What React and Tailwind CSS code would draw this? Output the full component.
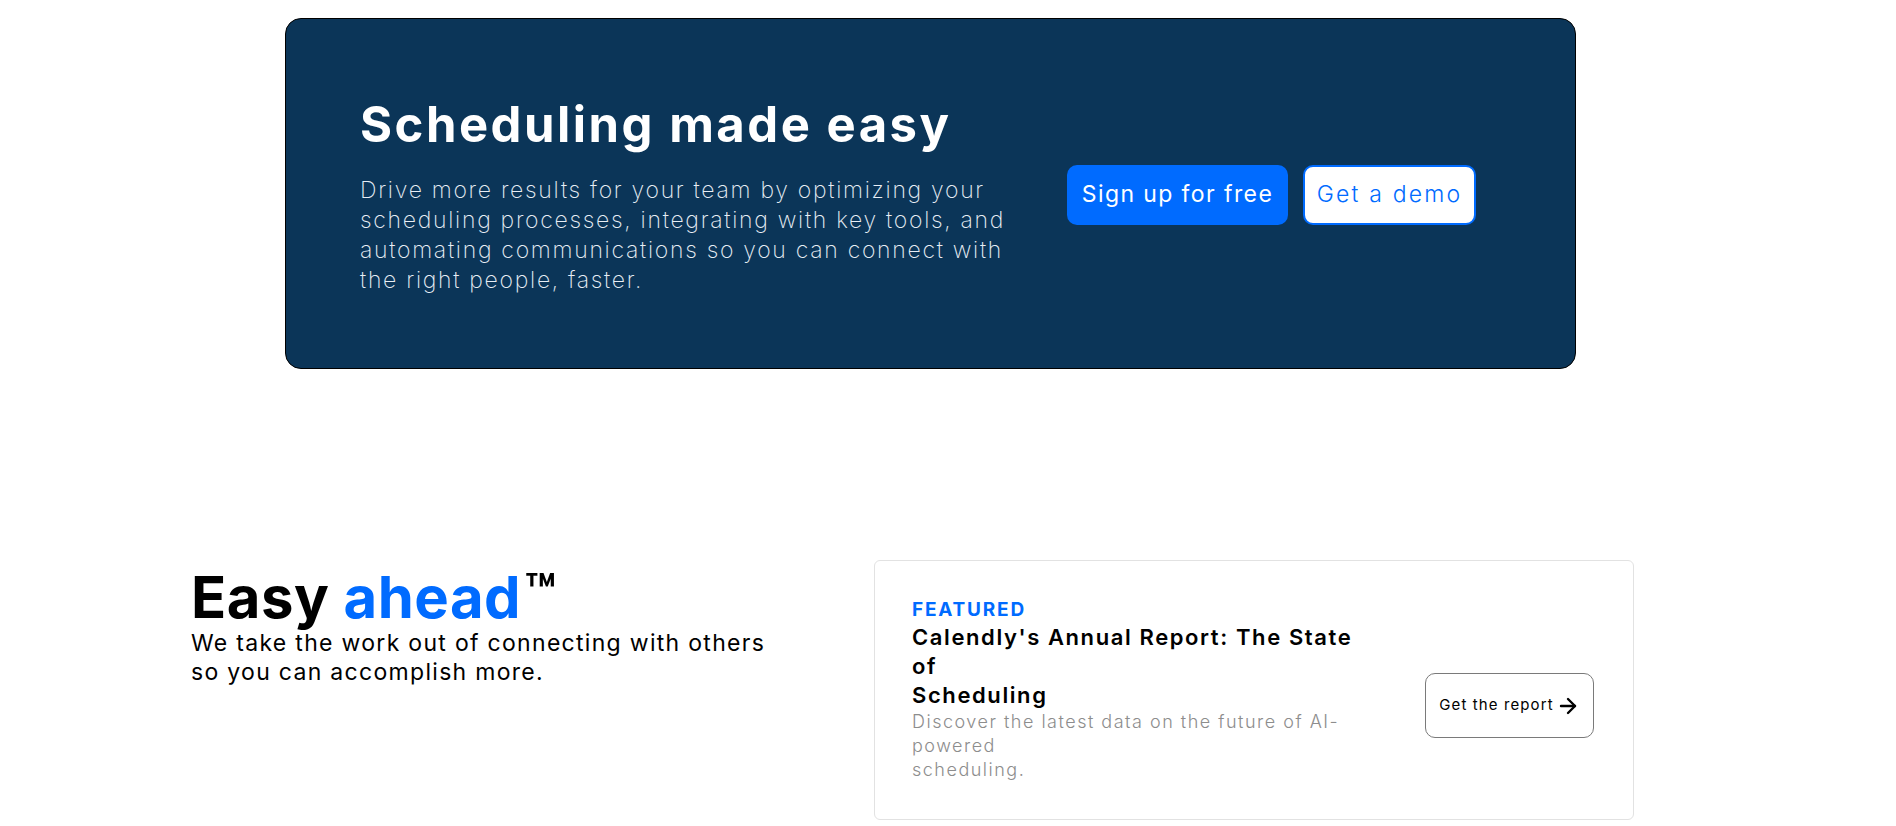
import React from 'react'
import { ArrowRight } from 'lucide-react'

const font = { fontFamily: 'Inter, "Open Sans", sans-serif' }

const Banner = () => {
  return (
    <div className="ml-[285px] mt-[18px] w-[1291px] h-[351px] rounded-2xl border border-black bg-[#0b3558] flex items-center pl-[74px]">
      {/* Copy */}
      <div className="w-[692px] mt-[4px]">
        <h1 className="text-[49px] leading-[58px] font-bold text-white tracking-[2.5px]">
          Scheduling made easy
        </h1>
        <p className="mt-[21px] text-[23px] leading-[30px] font-extralight text-[#e8eef5] tracking-[1.7px]">
          Drive more results for your team by optimizing your
          <br />
          scheduling processes, integrating with key tools, and
          <br />
          automating communications so you can connect with
          <br />
          the right people, faster.
        </p>
      </div>

      {/* Actions */}
      <div className="flex items-center gap-[15px] ml-[15px] mt-[2px]">
        <button className="h-[60px] w-[221px] rounded-[10px] bg-[#006bff] text-white text-[23px] font-normal tracking-[1.4px]">
          Sign up for free
        </button>
        <button className="h-[60px] w-[173px] rounded-[10px] bg-white border-2 border-[#006bff] text-[#006bff] text-[23px] font-light tracking-[2.2px]">
          Get a demo
        </button>
      </div>
    </div>
  )
}

const FeaturedCard = () => {
  return (
    <div className="w-[760px] h-[260px] rounded-md border border-[#e2e2e2] bg-white flex items-center justify-between pl-[37px] pr-[39px]">
      <div className="w-[460px]">
        <div className="text-[19px] leading-[22px] font-bold text-[#006bff] tracking-[1.8px]">FEATURED</div>
        <h3 className="mt-[2px] text-[22px] leading-[29px] font-semibold text-black tracking-[1.6px]">
          Calendly's Annual Report: The State
          <br />
          of
          <br />
          Scheduling
        </h3>
        <p className="text-[18px] leading-[24px] font-light text-[#8d8d8d] tracking-[1.5px]">
          Discover the latest data on the future of AI-
          <br />
          powered
          <br />
          scheduling.
        </p>
      </div>
      <button className="mt-[31px] h-[65px] w-[169px] rounded-[10px] border border-[#7a7a7a] bg-white flex items-center justify-center gap-[2px] text-[15px] text-black tracking-[1.1px]">
        Get the report
        <ArrowRight className="h-[24px] w-[24px]" strokeWidth={2.4} />
      </button>
    </div>
  )
}

export default function App() {
  return (
    <div className="min-h-[826px] w-[1896px] bg-white" style={font}>
      <Banner />

      {/* Easy ahead section */}
      <div className="mt-[191px] ml-[191px] flex items-start">
        <div className="w-[683px] pt-[5px]">
          <h2 className="text-[58px] leading-[64px] font-bold text-black tracking-[0.5px]">
            Easy <span className="text-[#006bff]">ahead</span>
            <span className="align-top text-[50px] leading-none relative top-[1px] ml-[3px]">™</span>
          </h2>
          <p className="text-[23px] leading-[29px] font-normal text-black tracking-[1.3px]">
            We take the work out of connecting with others
            <br />
            so you can accomplish more.
          </p>
        </div>
        <FeaturedCard />
      </div>
    </div>
  )
}
